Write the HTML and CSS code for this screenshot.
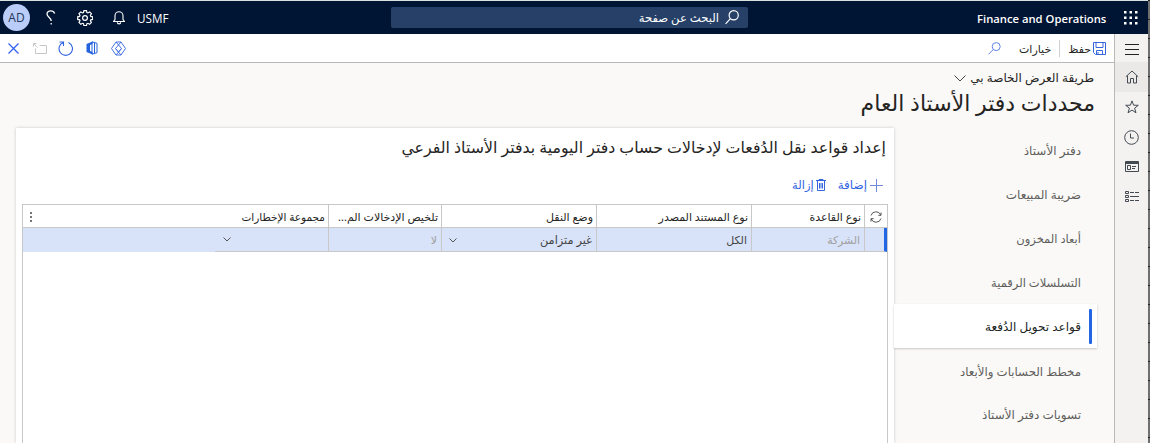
FILE: index.html
```html
<!DOCTYPE html>
<html lang="ar" dir="rtl">
<head>
<meta charset="utf-8">
<title>Finance and Operations</title>
<link rel="stylesheet" href="styles.css">
</head>
<body>
<div class="window">
  <div class="edge"></div>
  <div class="app">
    <header class="topbar">
      <svg class="waffle" width="14" height="14" viewBox="0 0 14 14" fill="#fff"><path d="M0 0h2.500v2.500H0zM5.500 0H8v2.500H5.500zM11 0h2.500v2.500H11zM0 5.500h2.500V8H0zM5.500 5.500H8V8H5.500zM11 5.500h2.500V8H11zM0 11h2.500v2.500H0zM5.500 11H8v2.500H5.500zM11 11h2.500v2.500H11z"/></svg>
      <span class="brand" dir="ltr">Finance and Operations</span>
      <div class="search">
        <svg width="14" height="15" viewBox="0 0 14 15" fill="none" stroke="#fff" stroke-width="1.200"><circle cx="8.700" cy="5.300" r="4.600"/><path d="M5.400 8.600 .6 13.800"/></svg>
        <span class="t-search">البحث عن صفحة</span>
      </div>
      <div class="top-actions">
        <span class="company">USMF</span>
        <svg class="bell" width="12" height="14" viewBox="0 0 12 14" fill="none" stroke="#fff" stroke-width="1.100"><path d="M.5 10.500h11L10 8.500V4.700a4 4 0 0 0-8 0v3.800zM4.300 11.200a1.700 1.700 0 0 0 3.400 0"/></svg>
        <svg class="gear" width="16" height="16" viewBox="0 0 16 16" fill="none" stroke="#fff" stroke-width="1.200"><path d="M6.700 1h2.600l.4 1.900 1 .4 1.700-1 1.800 1.800-1 1.700.4 1 1.900.4v2.600l-1.900.4-.4 1 1 1.700-1.800 1.800-1.700-1-1 .4-.4 1.900H6.700l-.4-1.900-1-.4-1.700 1-1.800-1.800 1-1.700-.4-1L.5 9.800V7.200l1.900-.4.4-1-1-1.700 1.800-1.800 1.700 1 1-.4z" transform="translate(.2 -.4)"/><circle cx="8" cy="8" r="2.400"/></svg>
        <svg class="help" width="10" height="15" viewBox="0 0 10 15" fill="none" stroke="#fff" stroke-width="1.300"><path d="M8.700 3.500C8 1.600 6.700.8 4.800.8 2.500.8 1 2.200 1 4c0 3.200 4.200 3.300 4.200 7M5.200 13v1.500"/></svg>
        <span class="avatar">AD</span>
      </div>
    </header>
    <div class="body">
      <nav class="rail">
        <span class="rail-item"><svg width="14" height="11" viewBox="0 0 14 11" stroke="#222"><path d="M0 .5h14M0 5.500h14M0 10.500h14"/></svg></span>
        <span class="rail-item rail-home"><svg width="14" height="14" viewBox="0 0 14 14" fill="none" stroke="#444a52"><path d="M.8 6.800 7 1l6.200 5.800M2.500 5.500v7.500h3V8.500h3V13h3V5.500"/></svg></span>
        <span class="rail-item"><svg width="14" height="14" viewBox="0 0 14 14" fill="none" stroke="#444a52"><path d="m7 .9 1.600 4.300 4.700.1-3.700 2.900 1.400 4.600L7 10.100l-4 2.700 1.400-4.600L.7 5.300l4.700-.1z"/></svg></span>
        <span class="rail-item"><svg width="15" height="15" viewBox="0 0 15 15" fill="none" stroke="#444a52"><circle cx="7.500" cy="7.500" r="6.800"/><path d="M6.500 3.500v4.500h3.500"/></svg></span>
        <span class="rail-item rail-news"><svg width="14" height="11" viewBox="0 0 14 11" fill="none" stroke="#444a52"><path d="M.5.5h13v10H.5zM.5 1.500h13M.5 2.500h13M2.500 4.500h3v4h-3zM7 5.500h4M7 7.500h3"/></svg></span>
        <span class="rail-item"><svg width="14" height="12" viewBox="0 0 14 12" fill="none" stroke="#444a52"><path d="M.5.5h3v2h-3zM.5 4.500h3v2h-3zM.5 8.500h3v2h-3zM5 1.500h4M10 1.500h4M5 5.500h9M5 9.500h4M10 9.500h4"/></svg></span>
      </nav>
      <main class="page">
        <div class="toolbar">
          <svg class="save" width="13" height="13" viewBox="0 0 13 13" fill="none" stroke="#3566dd"><path d="M.5.5h12v12H2.500l-2-2zM3 .5v5h7v-5M3.500 12V8.500h6V12M5 12v-2"/></svg>
          <span class="t-save">حفظ</span>
          <span class="sep"></span>
          <span class="t-options">خيارات</span>
          <svg class="find" width="13" height="13" viewBox="0 0 13 13" fill="none" stroke="#6284e6"><circle cx="8.200" cy="4.600" r="4"/><path d="M5.300 7.500.5 12.300"/></svg>
          <div class="tools">
            <svg width="15" height="15" viewBox="0 0 15 15" fill="none" stroke="#4472e2"><path d="M5 1h5l4.500 6.500L10 14H5L.5 7.500zM5 1l5.500 6.500L7.500 11 4.500 7.500 10 1M4.500 7.500 10 14M10.500 7.500 5 14"/></svg>
            <svg class="office" width="12" height="14" viewBox="0 0 12 14"><path fill="#2563dc" d="M.5 3 6.500.5V3L4 4v6l2.500 1v2.500L.5 11z"/><path fill="none" stroke="#2563dc" d="M6 .8l5 1.500v9.400l-5 1.500zM8.500 2v10"/></svg>
            <svg class="reload" width="15" height="15" viewBox="0 0 15 15" fill="none" stroke="#2f64e0" stroke-width="1.100"><path d="M5.200 1.500A6.700 6.700 0 1 0 10.500 1.600M1.500 1h4v4"/></svg>
            <svg class="popout" width="15" height="11" viewBox="0 0 15 11" fill="none" stroke="#c8c6c4"><path d="M2.500 5.500v5h11v-8H6.500M.5 3.500v-3h3M.5.500l4 4"/></svg>
            <svg class="close" width="11" height="11" viewBox="0 0 11 11" stroke="#2f5ff0" stroke-width="1.200"><path d="m.5.5 10 10M10.500.5l-10 10"/></svg>
          </div>
        </div>
        <div class="view"><span class="t-view">طريقة العرض الخاصة بي</span><svg width="12" height="7" viewBox="0 0 12 7" fill="none" stroke="#444"><path d="m.5.5 5.500 5.500L11.500.5"/></svg></div>
        <h1 class="t-title">محددات دفتر الأستاذ العام</h1>
        <div class="columns">
          <ul class="tabs">
            <li>دفتر الأستاذ</li>
            <li>ضريبة المبيعات</li>
            <li class="tight">أبعاد المخزون</li>
            <li class="tight">التسلسلات الرقمية</li>
            <li class="active">قواعد تحويل الدُفعة</li>
            <li class="snug">مخطط الحسابات والأبعاد</li>
            <li>تسويات دفتر الأستاذ</li>
          </ul>
          <section class="card">
            <h2>إعداد قواعد نقل الدُفعات لإدخالات حساب دفتر اليومية بدفتر الأستاذ الفرعي</h2>
            <div class="actions">
              <svg width="13" height="13" viewBox="0 0 13 13" stroke="#7088d8"><path d="M6.500 0v13M0 6.500h13"/></svg>
              <span class="t-add">إضافة</span>
              <svg class="trash" width="10" height="12" viewBox="0 0 10 12" fill="none" stroke="#3566dd"><path d="M0 1.500h10M3 1.500v-1h4v1M1.500 2v9.500h7V2M3.500 4v5.500M5 4v5.500M6.500 4v5.500"/></svg>
              <span class="t-remove">إزالة</span>
            </div>
            <div class="grid">
              <div class="row head">
                <span class="cell"><svg width="12" height="12" viewBox="0 0 12 12" fill="none" stroke="#555"><path d="M1 4.500A5.200 5.200 0 0 1 10.800 4M11 1.500V4.300H8.300M11 7.500A5.200 5.200 0 0 1 1.200 8M1 10.500V7.700h2.700"/></svg></span>
                <span class="cell">نوع القاعدة</span>
                <span class="cell">نوع المستند المصدر</span>
                <span class="cell">وضع النقل</span>
                <span class="cell">تلخيص الإدخالات الم...</span>
                <span class="cell last"><span class="narrow">مجموعة الإخطارات</span><svg width="2" height="10" viewBox="0 0 2 10" fill="#777"><path d="M0 0h2v2H0zM0 4h2v2H0zM0 8h2v2H0z"/></svg></span>
              </div>
              <div class="row data">
                <span class="cell marker"></span>
                <span class="cell muted company-cell">الشركة</span>
                <span class="cell">الكل</span>
                <span class="cell choice"><span>غير متزامن</span><svg width="8" height="5" viewBox="0 0 8 5" fill="none" stroke="#555"><path d="m.5.5 3.500 3.500L7.500.5"/></svg></span>
                <span class="cell muted">لا</span>
                <span class="cell notify"><svg width="8" height="5" viewBox="0 0 8 5" fill="none" stroke="#555"><path d="m.5.5 3.500 3.500L7.500.5"/></svg></span>
                <span class="cell filler"></span>
              </div>
            </div>
          </section>
        </div>
      </main>
    </div>
  </div>
</div>
</body>
</html>
```
FILE: styles.css
```css
* { box-sizing: border-box; }
body { margin: 0; font: 12px/16px "Noto Sans", "DejaVu Sans", sans-serif; color: #252423; }
svg { display: block; flex: none; }
span { white-space: nowrap; }
.window { display: flex; width: 1150px; height: 443px; overflow: hidden; }
.edge { width: 2px; background: repeating-linear-gradient(#222 0 1px, #6f6f6f 1px 19px); }
.app { width: 1148px; display: flex; flex-direction: column; }
.topbar { height: 34px; border-top: 1px solid #d8e2de; background: #001433; color: #fff; display: flex; align-items: center; }
.waffle { margin-right: 10px; }
.brand { margin-right: 18px; width: 129px; font: 600 11.250px/16px "Open Sans", sans-serif; padding-top: 2px; }
.search { margin-right: 229px; width: 357px; height: 21px; border-radius: 2px; background: #264068; display: flex; align-items: center; gap: 6px; padding-right: 9px; }
.t-search { font-size: 11.600px; }
.top-actions { margin-right: auto; display: flex; align-items: center; padding-left: 3px; }
.company { font: 11.700px/16px "Open Sans", sans-serif; padding-top: 1px; }
.bell { margin-right: 12px; }
.gear { margin-right: 20px; }
.help { margin-right: 21px; }
.avatar { width: 27px; height: 27px; border-radius: 50%; background: #b9cdf8; color: #263656; font: 12px/27px "Open Sans", sans-serif; text-align: center; margin-right: 16px; }
.body { flex: 1; display: flex; }
.rail { width: 34px; border-left: 1px solid #bab8b6; background: #f3f2f1; display: flex; flex-direction: column; }
.rail-item { height: 30px; display: flex; align-items: center; justify-content: center; }
.rail-item:first-child { height: 28px; padding-top: 2px; }
.rail-home { background: #eae9e8; }
.rail-news { padding-bottom: 1px; }
.page { width: 1114px; background: #faf9f8; display: flex; flex-direction: column; }
.toolbar { height: 29px; background: #fff; border-bottom: 1px solid #bab8b6; display: flex; align-items: center; padding-right: 8px; }
.t-save { margin-right: 2px; font-size: 11px; padding-top: 2px; }
.t-options { font-size: 11px; padding-top: 2px; }
.sep { width: 1px; height: 17px; background: #d2d0ce; margin: 0 8px; }
.find { margin-right: 18px; }
.tools { margin-right: auto; display: flex; align-items: center; padding-left: 8px; }
.office { margin-right: 13px; }
.reload { margin-right: 13px; }
.popout { margin-right: 10px; }
.close { margin-right: 14px; }
.view { height: 28px; padding: 2px 20px 0 0; display: flex; align-items: center; gap: 4px; }
h1 { height: 38px; margin: -1px 0 0; padding-right: 19px; font-size: 22px; line-height: 24px; font-weight: 400; }
.columns { display: flex; flex: 1; }
.tabs { width: 220px; margin: 0; padding: 0; list-style: none; color: #605e5c; display: flex; flex-direction: column; }
.tabs li { width: 203px; height: 44px; flex: none; margin-right: 17px; padding: 2px 16px 0 0; display: flex; align-items: center; }
.tabs .tight { font-size: 11.500px; }
.tabs .snug { font-size: 11.800px; }
.tabs .active { position: relative; z-index: 1; color: #201f1e; background: #fff; box-shadow: 0 1px 2px #0003; padding-right: 5px; }
.active::before { content: ""; width: 3px; height: 35px; border-radius: 1px; background: #2266e3; margin: -2px 0 0 8px; }
.card { width: 878px; background: #fff; box-shadow: 0 0 3px #0003; padding: 8px 6px 0; display: flex; flex-direction: column; }
h2 { height: 24px; margin: -1px 0 1px; padding-right: 2px; font-size: 15.800px; line-height: 24px; font-weight: 400; white-space: nowrap; }
.actions { height: 44px; padding: 6px 5px 0 0; display: flex; align-items: center; color: #2f64e0; }
.t-add { margin-right: 3px; }
.trash { margin-right: 12px; }
.t-remove { margin-right: 2px; font-size: 11.500px; }
.grid { flex: 1; border: 1px solid #c8c8c8; border-bottom: 0; }
.row { display: grid; grid-template-columns: 23px 113px 155px 155px 113px 1fr; height: 24px; font-size: 11px; }
.cell { border-left: 1px solid #c8c8c8; border-bottom: 1px solid #c8c8c8; padding-right: 3px; display: flex; align-items: center; min-width: 0; }
.cell:last-child { border-left: 0; }
.head { height: 23px; }
.head .cell { padding-top: 1px; }
.head .cell:first-child { padding-right: 5px; }
.last { justify-content: space-between; padding-left: 7px; }
.narrow { font-size: 10.500px; }
.data { grid-template-columns: 23px 113px 155px 155px 113px 113px 1fr; background: #d8e3fa; color: #444; }
.data .cell { padding: 1px 4px 0 0; }
.data .company-cell { font-size: 10.800px; }
.marker { border-right: 3px solid #2266e3; }
.muted { color: #a19f9d; }
.data .choice { justify-content: space-between; padding-left: 7px; font-size: 11.300px; }
.data .notify { border-left: 0; padding: 0 97px 0 0; }
.data .filler { border: 0; }
```
